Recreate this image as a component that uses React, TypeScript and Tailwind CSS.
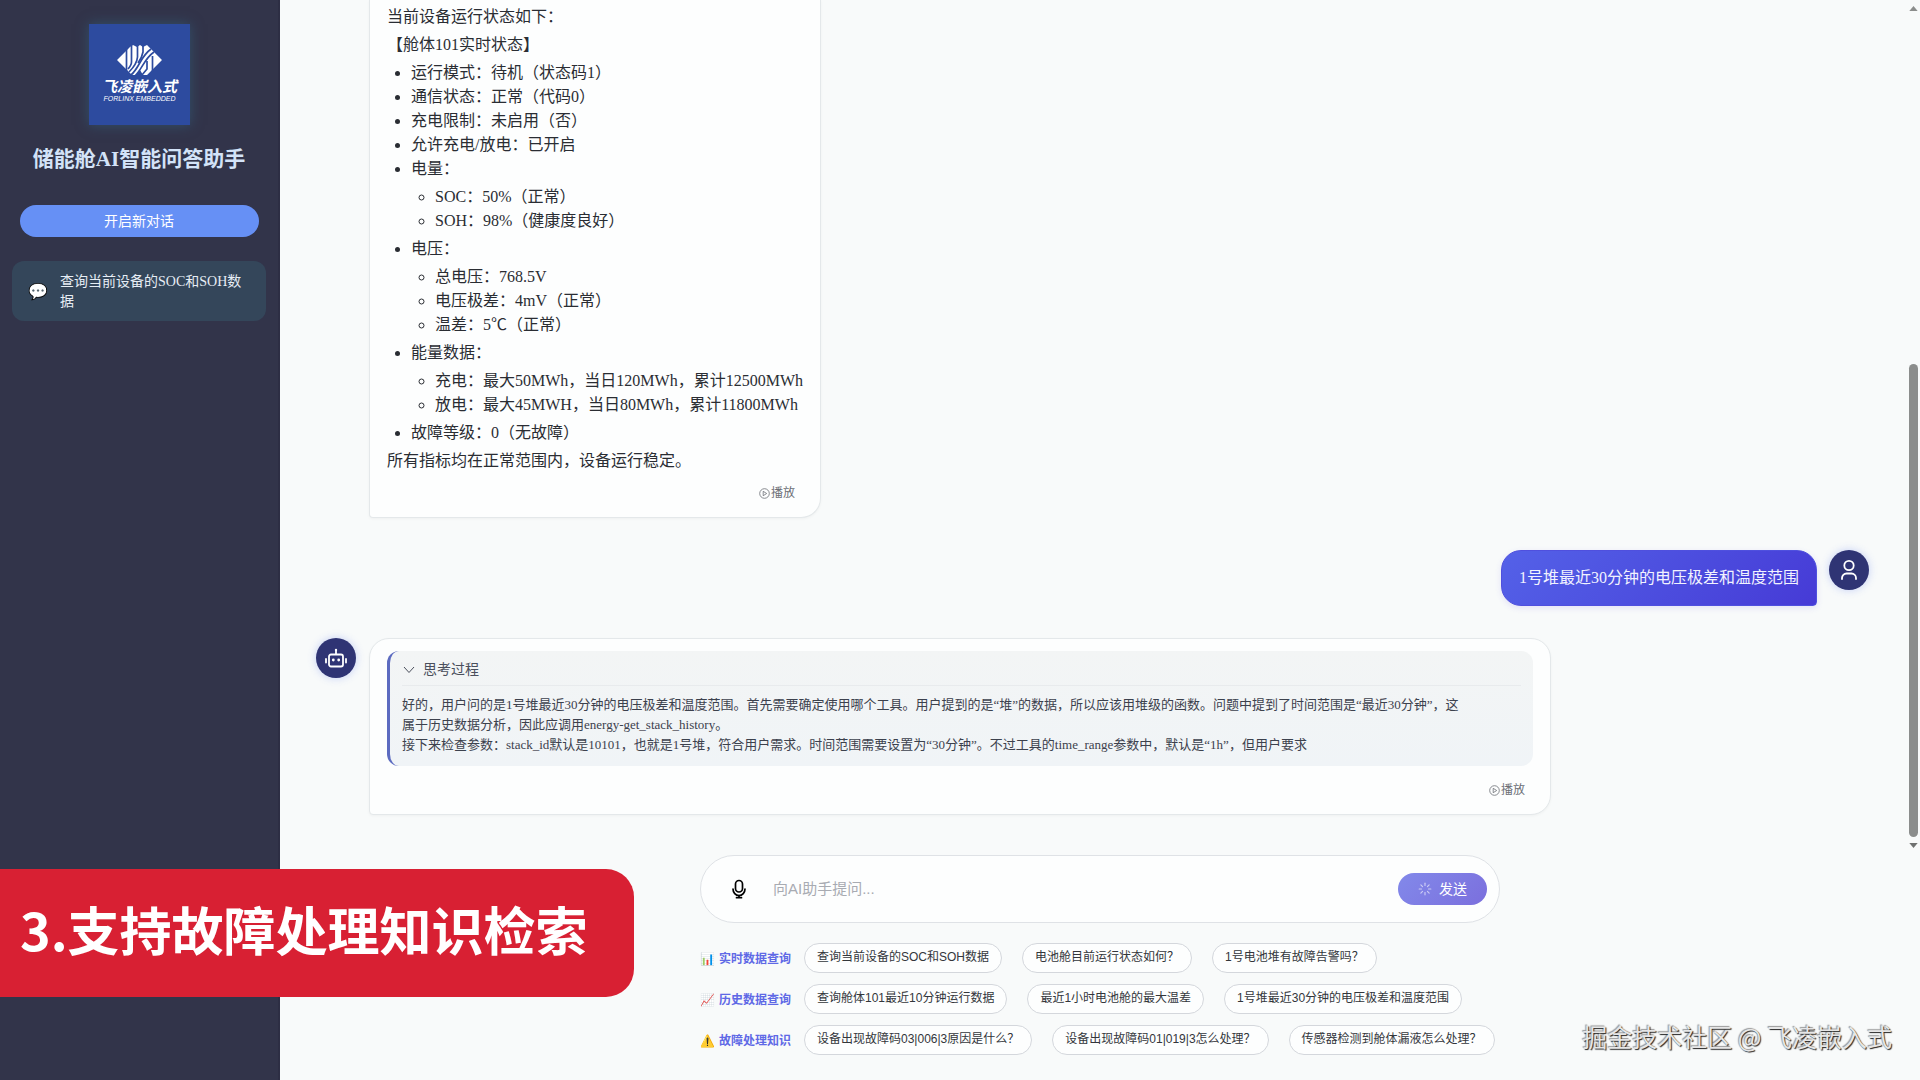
import { Loader } from "lucide-react";

const SERIF = "font-['Liberation_Serif','Noto_Sans_CJK_SC',serif]";
const SANS = "font-['Liberation_Sans','Noto_Sans_CJK_SC',sans-serif]";

function Logo() {
  return (
    <div className="flex size-[101px] flex-col items-center bg-[#2d4b9f] pt-[21px] text-white shadow-[0_0_12px_rgba(52,100,130,0.6)]">
      <svg viewBox="0 0 45 31" className="h-[31px] w-[45px]" role="img" aria-label="Forlinx">
        <path fill="#fff" d="M0 15 L13 2 L16 0 L20 2 L23 0 L26 2 L30 0 L45 15 L30 30 H26 L23 25 L19 30 H15 Z" />
        <g fill="none" stroke="#2d4b9f" strokeWidth="1.7">
          <path d="M9.5 2 V26" />
          <path d="M14.5 0 V17 Q14.500 20 11 24" />
          <path d="M20.500 0 V12 Q20 19 12 27" />
          <path d="M26 0 V7 Q25 13 21 18" />
          <path d="M14 30 C23 22 23 12 34 4" />
          <path d="M18 31 C26 23 27 14 37 7" />
          <path d="M30 16 V24 L25 30" />
          <path d="M35.500 11 V27" />
        </g>
      </svg>
      <div className="mt-px font-['Noto_Sans_CJK_SC',sans-serif] text-[15px] leading-[18px] font-bold italic">飞凌嵌入式</div>
      <div className={`${SANS} text-[7px] leading-[8px] whitespace-nowrap italic`}>FORLINX EMBEDDED</div>
    </div>
  );
}

function MicIcon() {
  return (
    <svg viewBox="0 0 24 24" className="size-6" fill="none" stroke="currentColor" strokeWidth="1.7" strokeLinecap="round">
      <rect x="8.500" y="3.500" width="7" height="11.500" rx="3.500" />
      <path d="M6 12 a6 6.500 0 0 0 12 0" />
      <path d="M12 18.500 V20.500 M9.500 20.700 H14.500" />
    </svg>
  );
}

function UserIcon() {
  return (
    <svg viewBox="0 0 24 24" className="size-6" fill="none" stroke="currentColor" strokeWidth="1.800" strokeLinecap="round">
      <circle cx="12" cy="7.500" r="4.700" />
      <path d="M5 21 V20 a4.500 4.500 0 0 1 4.500 -4.500 h5 a4.500 4.500 0 0 1 4.500 4.500 V21" />
    </svg>
  );
}

function RobotIcon() {
  return (
    <svg viewBox="0 0 24 24" className="size-6" fill="none" stroke="currentColor" strokeWidth="1.800" strokeLinecap="round">
      <rect x="5" y="8.500" width="14" height="12" rx="2" />
      <path d="M12 8 V5 M2 13 V16.500 M22 13 V16.500" />
      <circle cx="12" cy="4" r="1.200" fill="currentColor" stroke="none" />
      <circle cx="9.300" cy="14" r="1.400" fill="currentColor" stroke="none" />
      <circle cx="14.700" cy="14" r="1.400" fill="currentColor" stroke="none" />
    </svg>
  );
}

function Sidebar() {
  return (
    <aside className="flex w-[280px] shrink-0 flex-col items-center border-r-2 border-[#2d2e44] bg-[#32344a] px-3 pt-6">
      <div className="pl-px">
        <Logo />
      </div>
      <h1 className="mt-[19px] text-[21px] leading-[30px] font-bold whitespace-nowrap text-[#d3e3f8]">储能舱AI智能问答助手</h1>
      <button className="mt-[31px] h-8 w-[239px] rounded-full bg-[#6690f5] pt-px text-sm text-white">开启新对话</button>
      <button className="mt-6 flex w-full items-center rounded-xl bg-[#34465a] px-4 pt-[11px] pb-[9px] text-left text-[#e6edf5]">
        <span className="w-8 shrink-0 text-base">💬</span>
        <span className="text-sm leading-5">查询当前设备的SOC和SOH数据</span>
      </button>
    </aside>
  );
}

function PlayButton() {
  return (
    <button className="flex items-center gap-px text-xs leading-4 text-[#6b6e75]">
      <svg viewBox="0 0 11 11" className="size-[11px]" fill="none" stroke="currentColor" strokeWidth="0.8">
        <circle cx="5.500" cy="5.500" r="4.800" />
        <path d="M4.200 3.300 L7.700 5.500 L4.200 7.700 Z" />
      </svg>
      播放
    </button>
  );
}

function Avatar({ kind }: { kind: "bot" | "user" }) {
  return (
    <div className="flex size-10 shrink-0 items-center justify-center rounded-full bg-[#2f3474] text-white shadow-[0_0_8px_rgba(80,110,240,0.3)]">
      {kind === "bot" ? <RobotIcon /> : <UserIcon />}
    </div>
  );
}

const BUBBLE = "rounded-[20px] rounded-bl border border-[#e4e8ea] bg-[#fdfefe] px-[17px] shadow-[0_1px_3px_rgba(0,0,0,0.04)]";

function StatusMessage() {
  return (
    <div className={`ml-[53px] rounded-t-none border-t-0 pt-[5px] pb-4 ${BUBBLE}`}>
      <div className="space-y-1 text-base leading-6 text-[#2a2d33]">
        <p>当前设备运行状态如下：</p>
        <p>【舱体101实时状态】</p>
        <ul className="list-disc pl-6 [&_ul]:my-1 [&_ul]:list-[circle] [&_ul]:pl-6">
          <li>运行模式：待机（状态码1）</li>
          <li>通信状态：正常（代码0）</li>
          <li>充电限制：未启用（否）</li>
          <li>允许充电/放电：已开启</li>
          <li>
            电量：
            <ul>
              <li>SOC：50%（正常）</li>
              <li>SOH：98%（健康度良好）</li>
            </ul>
          </li>
          <li>
            电压：
            <ul>
              <li>总电压：768.5V</li>
              <li>电压极差：4mV（正常）</li>
              <li>温差：5℃（正常）</li>
            </ul>
          </li>
          <li>
            能量数据：
            <ul>
              <li>充电：最大50MWh，当日120MWh，累计12500MWh</li>
              <li>放电：最大45MWH，当日80MWh，累计11800MWh</li>
            </ul>
          </li>
          <li>故障等级：0（无故障）</li>
        </ul>
        <p>所有指标均在正常范围内，设备运行稳定。</p>
      </div>
      <div className="mt-3 flex justify-end pr-2">
        <PlayButton />
      </div>
    </div>
  );
}

function ThinkingMessage() {
  return (
    <div className={`max-w-[1182px] min-w-0 flex-1 pt-3 pb-4 ${BUBBLE}`}>
      <section className="rounded-xl border-l-[3px] border-[#5c6bc0] bg-linear-to-b from-[#f3f5f5] to-[#f0f4f7] px-3 pb-[11px]">
        <button className="flex h-[35px] w-full items-center gap-[7px] border-b border-[#e8ebed] pt-1 text-sm text-[#4a4f5c]">
          <svg viewBox="0 0 14 14" className="size-[14px]" fill="none" stroke="currentColor" strokeWidth="1">
            <path d="M2 4 L7 9.500 L12 4" />
          </svg>
          思考过程
        </button>
        <p className="pt-[9px] text-[13px] leading-5 text-[#3c414d]">
          好的，用户问的是1号堆最近30分钟的电压极差和温度范围。首先需要确定使用哪个工具。用户提到的是“堆”的数据，所以应该用堆级的函数。问题中提到了时间范围是“最近30分钟”，这
          <br />
          属于历史数据分析，因此应调用energy-get_stack_history。
          <br />
          接下来检查参数：stack_id默认是10101，也就是1号堆，符合用户需求。时间范围需要设置为“30分钟”。不过工具的time_range参数中，默认是“1h”，但用户要求
        </p>
      </section>
      <div className="mt-4 flex justify-end pr-2">
        <PlayButton />
      </div>
    </div>
  );
}

function Scrollbar() {
  return (
    <div className="absolute inset-y-0 right-[2px] flex flex-col items-center pt-[6px] pb-1" aria-hidden="true">
      <svg viewBox="0 0 10 6" className="h-[5px] w-[9px]" fill="#8b8d8c">
        <path d="M0 6 H10 L5 0 Z" />
      </svg>
      <div className="mt-auto h-[473px] w-[9px] rounded-full bg-[#8b8d8c]" />
      <svg viewBox="0 0 10 6" className="mt-[6px] h-[5px] w-[9px]" fill="#6f7170">
        <path d="M0 0 H10 L5 6 Z" />
      </svg>
    </div>
  );
}

const SUGGESTIONS = [
  { icon: "📊", label: "实时数据查询", items: ["查询当前设备的SOC和SOH数据", "电池舱目前运行状态如何？", "1号电池堆有故障告警吗？"] },
  { icon: "📈", label: "历史数据查询", items: ["查询舱体101最近10分钟运行数据", "最近1小时电池舱的最大温差", "1号堆最近30分钟的电压极差和温度范围"] },
  { icon: "⚠️", label: "故障处理知识", items: ["设备出现故障码03|006|3原因是什么？", "设备出现故障码01|019|3怎么处理？", "传感器检测到舱体漏液怎么处理？"] },
];

function Composer() {
  return (
    <footer className="mx-auto w-full max-w-[800px]">
      <form className="flex h-[68px] items-center rounded-full border border-[#dfe2e6] bg-[#fdfefe] pr-3 pl-[26px]">
        <button type="button" aria-label="语音输入" className="text-black">
          <MicIcon />
        </button>
        <input
          aria-label="提问"
          placeholder="向AI助手提问..."
          className={`${SANS} ml-[22px] min-w-0 flex-1 bg-transparent text-[15px] outline-none placeholder:text-[#a8abb2]`}
        />
        <button type="button" className={`${SANS} flex h-8 items-center gap-[7px] rounded-full bg-linear-135 from-[#8289ea] to-[#7b6fdd] px-5 text-sm text-white`}>
          <Loader size={14} className="opacity-60" />
          发送
        </button>
      </form>
      <div className={`${SANS} mt-5 space-y-[11px]`}>
        {SUGGESTIONS.map((row) => (
          <div key={row.label} className="flex items-center gap-5">
            <div className="-mr-[7px] flex items-center gap-1 pt-px text-xs font-bold whitespace-nowrap text-[#5f69e6]">
              <span>{row.icon}</span>
              {row.label}
            </div>
            {row.items.map((item) => (
              <button key={item} className="h-[30px] rounded-full border border-[#d4d7dc] bg-[#fdfefe] px-3 pb-[3px] text-xs whitespace-nowrap text-[#33363b]">
                {item}
              </button>
            ))}
          </div>
        ))}
      </div>
    </footer>
  );
}

export default function App() {
  return (
    <div className={`${SERIF} relative flex h-screen overflow-hidden bg-[#f8fafa]`}>
      <Sidebar />
      <main className="flex min-w-0 flex-1 flex-col">
        <div className="relative min-h-0 flex-1">
          <div className="flex h-full flex-col gap-8 overflow-hidden pr-[51px] pl-9">
            <div className="flex items-start">
              <StatusMessage />
            </div>
            <div className="flex items-start justify-end gap-3">
              <div className="rounded-[20px] rounded-br border border-[#4f50de] bg-linear-135 from-[#5461e8] to-[#463ad6] px-[17px] py-[15px] text-base leading-6 text-[#f1f2ff] shadow-[0_2px_6px_rgba(70,60,220,0.12)]">
                1号堆最近30分钟的电压极差和温度范围
              </div>
              <Avatar kind="user" />
            </div>
            <div className="flex items-start gap-[13px]">
              <Avatar kind="bot" />
              <ThinkingMessage />
            </div>
          </div>
          <Scrollbar />
        </div>
        <div className="px-10 pt-[3px] pb-[25px]">
          <Composer />
        </div>
      </main>
      <div className="absolute bottom-[83px] left-0 rounded-r-[28px] bg-[#d82033] pt-5 pr-[46px] pb-7 pl-5 font-['Noto_Sans_CJK_SC',sans-serif] text-[52px] leading-[80px] font-bold whitespace-nowrap text-white">
        3.支持故障处理知识检索
      </div>
      <div className="absolute right-7 bottom-[26px] font-['Noto_Sans_CJK_SC',sans-serif] text-[25px] leading-9 whitespace-nowrap text-[#e6e6e6] [text-shadow:1px_1px_1px_#222,-1px_-1px_1px_#999]">
        掘金技术社区 @ 飞凌嵌入式
      </div>
    </div>
  );
}
